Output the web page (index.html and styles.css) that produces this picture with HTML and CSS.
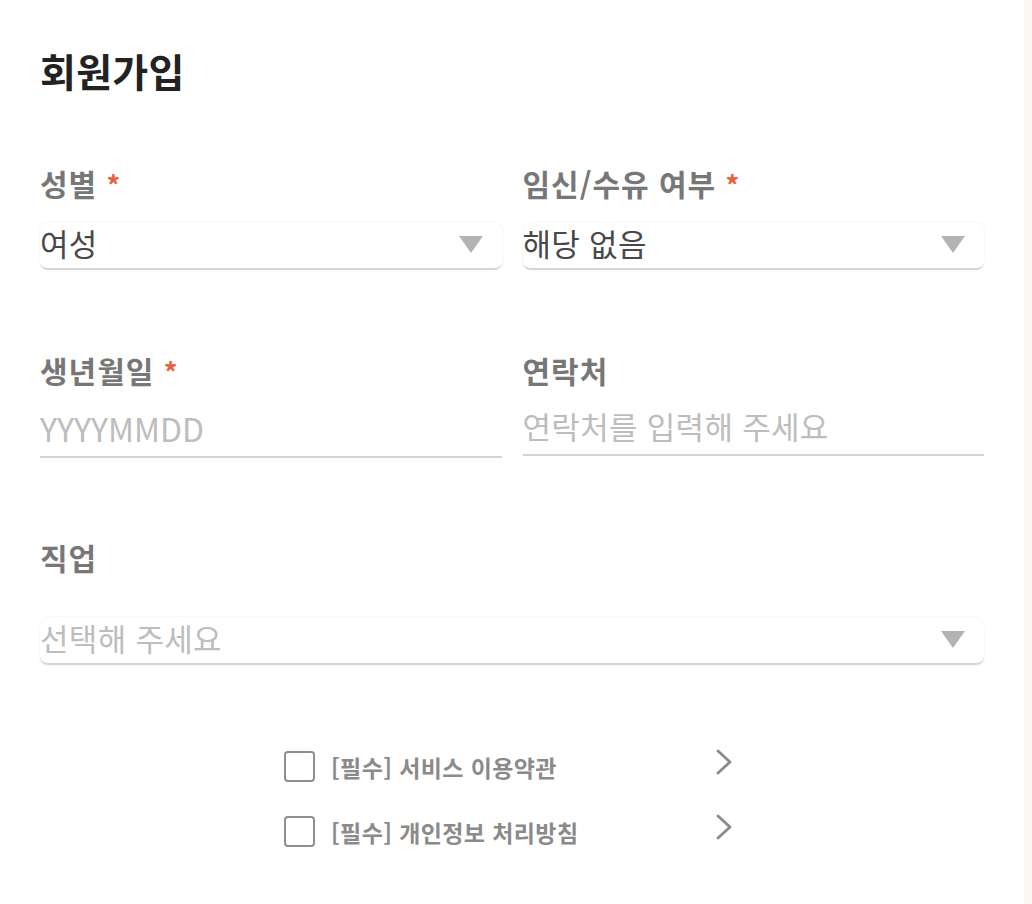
FILE: index.html
```html
<!DOCTYPE html>
<html lang="ko">
<head>
<meta charset="utf-8">
<title>회원가입</title>
<link rel="stylesheet" href="styles.css">
</head>
<body>
<div class="page">
  <main class="content">
    <h1 class="title">회원가입</h1>

    <div class="row row-first">
      <div class="field">
        <div class="label">성별 <span class="req">*</span></div>
        <div class="select">
          <span class="value">여성</span>
          <svg class="arrow" width="24" height="17" viewBox="0 0 24 17"><polygon points="0,0 24,0 12,17" fill="#b3b3b3"/></svg>
        </div>
      </div>
      <div class="field">
        <div class="label">임신/수유 여부 <span class="req">*</span></div>
        <div class="select">
          <span class="value">해당 없음</span>
          <svg class="arrow" width="24" height="17" viewBox="0 0 24 17"><polygon points="0,0 24,0 12,17" fill="#b3b3b3"/></svg>
        </div>
      </div>
    </div>

    <div class="row row-second">
      <div class="field">
        <div class="label">생년월일 <span class="req">*</span></div>
        <div class="input"><span class="placeholder latin">YYYYMMDD</span></div>
      </div>
      <div class="field">
        <div class="label">연락처</div>
        <div class="input"><span class="placeholder">연락처를 입력해 주세요</span></div>
      </div>
    </div>

    <div class="field field-job">
      <div class="label">직업</div>
      <div class="select select-job">
        <span class="placeholder">선택해 주세요</span>
        <svg class="arrow" width="24" height="17" viewBox="0 0 24 17"><polygon points="0,0 24,0 12,17" fill="#b3b3b3"/></svg>
      </div>
    </div>

    <div class="agreements">
      <div class="agree">
        <span class="check"></span>
        <span class="agree-text">[필수] 서비스 이용약관</span>
        <svg class="chev" width="16" height="26" viewBox="0 0 16 26"><polyline points="2,2 14,13 2,24" fill="none" stroke="#8a8a8a" stroke-width="2.8" stroke-linecap="round" stroke-linejoin="round"/></svg>
      </div>
      <div class="agree">
        <span class="check"></span>
        <span class="agree-text">[필수] 개인정보 처리방침</span>
        <svg class="chev" width="16" height="26" viewBox="0 0 16 26"><polyline points="2,2 14,13 2,24" fill="none" stroke="#8a8a8a" stroke-width="2.8" stroke-linecap="round" stroke-linejoin="round"/></svg>
      </div>
    </div>
  </main>
  <div class="side"></div>
</div>
</body>
</html>
```
FILE: styles.css
```css
html, body {
  margin: 0;
  padding: 0;
  background: #ffffff;
}

body {
  font-family: "Noto Sans CJK KR", "Noto Sans", sans-serif;
  color: #444;
}

.page {
  display: flex;
  width: 1032px;
  min-height: 904px;
}

.content {
  flex: 1;
  padding: 45px 40px 0 40px;
  box-sizing: border-box;
}

.side {
  width: 8px;
  background: #fdf6f3;
}

.title {
  margin: 0;
  font-size: 39px;
  line-height: 50px;
  font-weight: 700;
  color: #222;
  letter-spacing: 0.3px;
}

.row {
  display: grid;
  grid-template-columns: 1fr 1fr;
  column-gap: 21px;
}

.row-first {
  margin-top: 70px;
}

.row-second {
  margin-top: 82px;
}

.field {
  display: flex;
  flex-direction: column;
}

.label {
  font-size: 30px;
  line-height: 36px;
  font-weight: 700;
  color: #777;
  letter-spacing: 1px;
}

.req {
  color: #e8603c;
  font-size: 27px;
}

.select {
  margin-top: 20px;
  height: 47px;
  box-sizing: border-box;
  padding-bottom: 6px;
  display: flex;
  align-items: center;
  justify-content: space-between;
  background: #fff;
  border-radius: 8px;
  border-bottom: 2px solid #d6d6d6;
  box-shadow: 0 0 3px rgba(0, 0, 0, 0.07);
  padding-right: 19px;
}

.select .arrow {
  margin-top: 4px;
}

.value {
  font-size: 31px;
  line-height: 40px;
  color: #484848;
  letter-spacing: 0.3px;
}

.placeholder {
  font-size: 31px;
  line-height: 40px;
  color: #bdbdbd;
  letter-spacing: 0.3px;
}

.placeholder.latin {
  font-size: 32px;
  letter-spacing: 0;
}

.input {
  margin-top: 20px;
  height: 48px;
  box-sizing: border-box;
  padding-bottom: 10px;
  display: flex;
  align-items: center;
  border-bottom: 2px solid #d3d3d3;
}

.field-job {
  margin-top: 81px;
}

.select-job {
  margin-top: 43px;
}

.agreements {
  margin-top: 86px;
  width: 448px;
  margin-left: 244px;
  display: flex;
  flex-direction: column;
  gap: 34px;
}

.agree {
  display: flex;
  align-items: center;
  height: 31px;
}

.check {
  width: 27px;
  height: 27px;
  border: 2px solid #8e8e8e;
  border-radius: 4px;
  flex: none;
}

.agree-text {
  margin-left: 16px;
  font-size: 23px;
  font-weight: 700;
  color: #8a8a8a;
  letter-spacing: 0.4px;
  flex: 1;
}

.chev {
  flex: none;
  margin-top: -10px;
}
```
